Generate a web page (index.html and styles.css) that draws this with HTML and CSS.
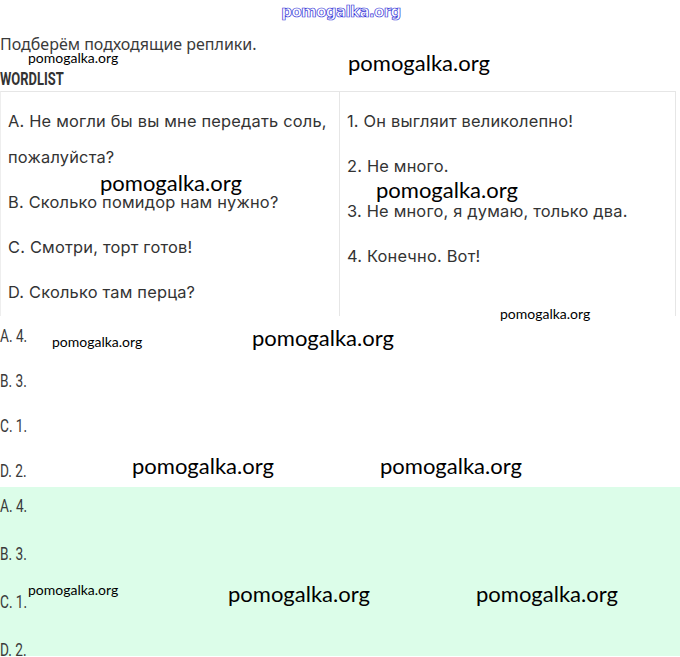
FILE: index.html
```html
<!DOCTYPE html>
<html lang="ru">
<head>
<meta charset="utf-8">
<title>Подберём подходящие реплики</title>
<link rel="stylesheet" href="styles.css">
</head>
<body>
<div class="page">
  <div class="site">pomogalka.org</div>
  <p class="intro">Подберём подходящие реплики.</p>
  <h3 class="wordlist"><span>WORDLIST</span></h3>
  <div class="table">
    <div class="cell">
      <p>А. Не могли бы вы мне передать соль, пожалуйста?</p>
      <p>В. Сколько помидор нам нужно?</p>
      <p>С. Смотри, торт готов!</p>
      <p>D. Сколько там перца?</p>
    </div>
    <div class="cell">
      <p>1. Он выгляит великолепно!</p>
      <p>2. Не много.</p>
      <p>3. Не много, я думаю, только два.</p>
      <p>4. Конечно. Вот!</p>
    </div>
  </div>
  <div class="answers">
    <p><span>A. 4.</span></p>
    <p><span>B. 3.</span></p>
    <p><span>C. 1.</span></p>
    <p><span>D. 2.</span></p>
  </div>
  <div class="answers green">
    <p><span>A. 4.</span></p>
    <p><span>B. 3.</span></p>
    <p><span>C. 1.</span></p>
    <p><span>D. 2.</span></p>
  </div>

  <span class="wm big" style="left:348px;top:51px">pomogalka.org</span>
  <span class="wm big" style="left:100px;top:171px">pomogalka.org</span>
  <span class="wm big" style="left:376px;top:178px">pomogalka.org</span>
  <span class="wm big" style="left:252px;top:326px">pomogalka.org</span>
  <span class="wm big" style="left:132px;top:454px">pomogalka.org</span>
  <span class="wm big" style="left:380px;top:454px">pomogalka.org</span>
  <span class="wm big" style="left:228px;top:582px">pomogalka.org</span>
  <span class="wm big" style="left:476px;top:582px">pomogalka.org</span>
  <span class="wm small" style="left:28px;top:50px">pomogalka.org</span>
  <span class="wm small" style="left:500px;top:306px">pomogalka.org</span>
  <span class="wm small" style="left:52px;top:334px">pomogalka.org</span>
  <span class="wm small" style="left:28px;top:582px">pomogalka.org</span>
</div>
</body>
</html>
```

FILE: styles.css
```css
html, body {
  margin: 0;
  padding: 0;
  background: #fff;
}
.page {
  position: relative;
  width: 680px;
  height: 657px;
  overflow: hidden;
  color: #333;
}
.site {
  height: 26px;
  line-height: 24px;
  text-align: center;
  font-family: "DejaVu Sans", sans-serif;
  font-weight: 700;
  font-size: 15px;
  letter-spacing: -0.6px;
  color: #fff;
  -webkit-text-stroke: 0.7px #3434d8;
  padding-left: 2px;
}
.intro {
  margin: 6px 0 0;
  font-family: "Noto Sans", sans-serif;
  font-size: 16px;
  line-height: 24px;
  color: #3a3a3a;
}
.wordlist {
  margin: 13px 0 0;
  font-family: "Roboto", sans-serif;
  font-weight: 700;
  font-size: 18px;
  line-height: 20px;
  height: 20px;
  color: #333;
}
.wordlist span {
  display: inline-block;
  transform: scaleX(0.72);
  transform-origin: left center;
}
.table {
  margin-top: 2px;
  width: 675px;
  display: grid;
  grid-template-columns: 339px 336px;
  border-top: 1px solid #e6e6e6;
  border-left: 1px solid #eee;
}
.cell {
  border-right: 1px solid #e6e6e6;
  padding: 11px 0 0 7px;
  height: 213px;
  font-family: "Inter", sans-serif;
  font-size: 16.4px;
  letter-spacing: 0.2px;
  color: #333;
}
.cell p {
  margin: 0 0 9px;
  line-height: 36px;
}
.answers {
  font-family: "Roboto", sans-serif;
  font-size: 17.5px;
  color: #3a3a3a;
  height: 171px;
  padding-top: 3px;
  box-sizing: border-box;
}
.answers span {
  display: inline-block;
  transform: scaleX(0.78);
  transform-origin: left center;
}
.answers p {
  margin: 0 0 11px;
  line-height: 34px;
}
.green {
  background: #dcfde9;
  height: 169px;
  padding-top: 1px;
}
.green p {
  margin: 0 0 12px;
  line-height: 36px;
}
.wm {
  position: absolute;
  font-family: "Lato", "Open Sans", sans-serif;
  color: #000;
  white-space: nowrap;
  line-height: 24px;
}
.big {
  font-size: 22px;
}
.small {
  font-size: 14px;
  line-height: 16px;
}
```
